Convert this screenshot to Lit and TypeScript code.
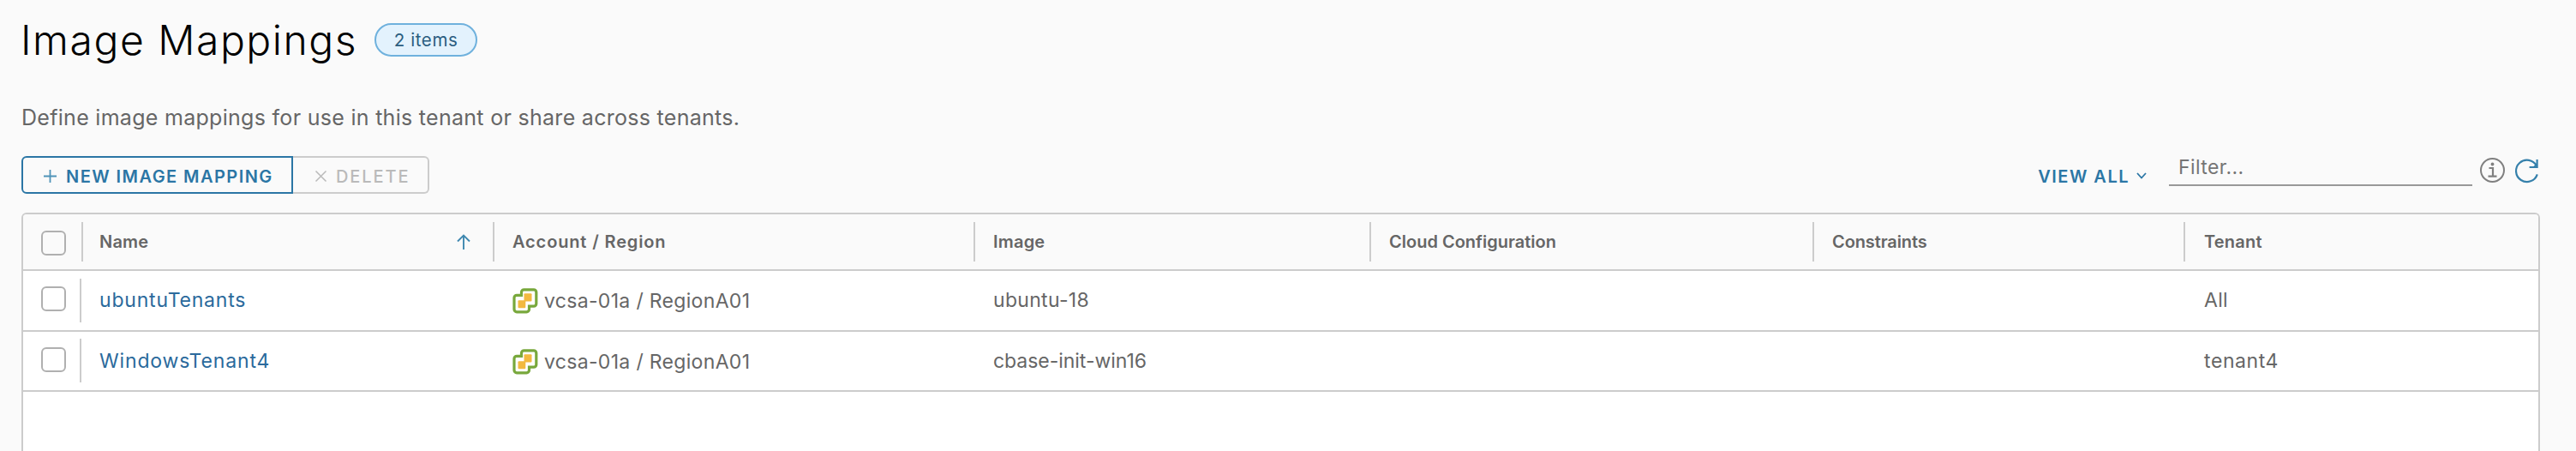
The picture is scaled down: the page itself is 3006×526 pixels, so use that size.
import { LitElement, html, css, svg } from "lit";

interface Column { label: string; track: number; spacing: number; sorted?: boolean }
interface Cell { text: string; spacing: number }
interface Row { name: Cell; account: Cell; image: Cell; tenant: Cell }

const columns: Column[] = [
  { label: "Name", track: 480, spacing: 0.2, sorted: true },
  { label: "Account / Region", track: 561, spacing: 0.86 },
  { label: "Image", track: 462, spacing: 0.2 },
  { label: "Cloud Configuration", track: 517, spacing: 0 },
  { label: "Constraints", track: 433, spacing: -0.1 },
  { label: "Tenant", track: 413, spacing: 0.2 },
];

const rows: Row[] = [
  {
    name: { text: "ubuntuTenants", spacing: 0.8 },
    account: { text: "vcsa-01a / RegionA01", spacing: 0.32 },
    image: { text: "ubuntu-18", spacing: 0.3 },
    tenant: { text: "All", spacing: 0.3 },
  },
  {
    name: { text: "WindowsTenant4", spacing: 0.86 },
    account: { text: "vcsa-01a / RegionA01", spacing: 0.32 },
    image: { text: "cbase-init-win16", spacing: -0.04 },
    tenant: { text: "tenant4", spacing: 0.6 },
  },
];

const label = (text: string, spacing: number) =>
  html`<span style="letter-spacing:${spacing}px">${text}</span>`;

// Two overlapping rounded squares with an offset pair of blocks inside.
const accountIcon = html`<svg class="account-icon" viewBox="0 0 30 30">${svg`
  <path d="M13.500 1.800h11.300a3 3 0 0 1 3 3v13.400a3 3 0 0 1-3 3h-5.300v3.600a3 3 0 0 1-3 3H5a3 3 0 0 1-3-3V11.300a3 3 0 0 1 3-3h5.500v-3.500a3 3 0 0 1 3-3z"
    fill="#fff" stroke="#78a83c" stroke-width="3.200"/>
  <rect x="13.500" y="6.300" width="9" height="9.300" rx="1" fill="#f2b940"/>
  <rect x="6.500" y="14.300" width="8.800" height="8.900" rx="1" fill="#f2b940"/>`}
</svg>`;

class AppRoot extends LitElement {
  static styles = css`
    :host { display: block; height: 526px; overflow: hidden; background: #fafafa; font-family: Inter, sans-serif; color: #666; white-space: nowrap; }
    * { box-sizing: border-box; }
    svg { display: block; fill: none; flex: none; }
    .page { display: flex; flex-direction: column; height: 526px; padding: 0 42px 0 25px; }
    .heading { display: flex; align-items: center; height: 93px; gap: 20px; }
    h1 { margin: 0 0 0 -1px; font-size: 48px; font-weight: 300; color: #000; letter-spacing: 1.53px; line-height: 60px; }
    .badge { display: flex; align-items: center; justify-content: center; width: 120px; height: 39px; border: 2px solid #6fb1dd; border-radius: 20px; background: #e3f2fd; color: #2b5d80; font-size: 20.5px; letter-spacing: 0.6px; }
    .intro { margin: 0; height: 88px; line-height: 88px; font-size: 25px; letter-spacing: 0.29px; }
    .toolbar { display: flex; justify-content: space-between; height: 67px; padding-top: 1px; }
    .group { display: flex; height: 44px; }
    button { display: flex; align-items: center; height: 44px; margin: 0; font: 600 20px Inter, sans-serif; background: none; border: 2px solid #2b76a5; color: #2b76a5; }
    .create { width: 317px; padding: 3px 0 0 23px; gap: 10px; border-radius: 6px 0 0 6px; letter-spacing: 1.45px; }
    .delete { width: 159px; padding: 3px 0 0 25px; gap: 10px; border-color: #ccc; border-left: 0; border-radius: 0 6px 6px 0; color: #bababa; font-weight: 500; letter-spacing: 1.9px; }
    .tools { display: flex; height: 44px; }
    .view { border: 0; padding: 4px 0 0; gap: 8px; margin-right: 26px; letter-spacing: 1.5px; }
    .filter { width: 354px; height: 35px; border-bottom: 2px solid #999; padding-left: 11px; line-height: 26px; font-size: 23px; letter-spacing: 0.4px; color: #757575; }
    .info { margin: 1px 0 0 8px; }
    .refresh { margin: 2px 1px 0 10px; }
    .grid { flex: 1; border: 2px solid #ccc; border-bottom: 0; border-radius: 6px 6px 0 0; background: #fff; }
    .head, .row { display: flex; border-bottom: 2px solid #ccc; align-items: center; }
    .head { height: 66px; background: #fafafa; border-radius: 4px 4px 0 0; font-size: 20px; font-weight: 600; }
    .row { height: 70.500px; font-size: 23px; }
    .pick { flex: none; width: 68px; height: 100%; padding: 2px 0 0 21px; display: flex; align-items: center; }
    .row .pick { width: 66px; padding: 0 0 3px 21px; }
    .box { width: 29px; height: 29px; border: 2px solid #b0b0b0; border-radius: 6px; }
    .cell { flex: none; display: flex; align-items: center; height: 46px; padding-left: 21px; }
    .head .cell { border-left: 2px solid #ccc; }
    .head .cell:nth-child(2) { padding-left: 19px; }
    .head .cell:last-child { padding-left: 22px; }
    .row .cell { padding: 0 0 0 23px; }
    .row .first { width: 482px; border-left: 2px solid #ccc; height: 51px; padding-left: 21px; }
    .row .cell:last-child { padding-left: 24px; }
    .row .account { padding: 2px 0 0 23px; }
    .sort { margin: 0 26px 0 auto; }
    .link { color: #2b6a9c; }
    .account-icon { width: 30px; height: 30px; margin-right: 7px; }
  `;

  render() {
    return html`<div class="page">
      <div class="heading"><h1>Image Mappings</h1><div class="badge">2 items</div></div>
      <p class="intro">Define image mappings for use in this tenant or share across tenants.</p>
      <div class="toolbar">
        <div class="group">
          <button class="create"><svg width="17" height="17" viewBox="0 0 17 17"><path d="M8.500 1v15M1 8.500h15" stroke="#4f93b8" stroke-width="1.800"/></svg>NEW IMAGE MAPPING</button>
          <button class="delete"><svg width="15" height="15" viewBox="0 0 15 15"><path d="M1.500 1.500l12 12M13.500 1.500l-12 12" stroke="#bababa" stroke-width="1.500"/></svg>DELETE</button>
        </div>
        <div class="tools">
          <button class="view">VIEW ALL<svg width="12" height="11" viewBox="0 0 12 11"><path d="M1 1l5 5.500L11 1" stroke="#2b76a5" stroke-width="1.800"/></svg></button>
          <div class="filter">Filter...</div>
          <svg class="info" width="31" height="31" viewBox="0 0 31 31"><circle cx="15.500" cy="15.500" r="13.500" stroke="#808080" stroke-width="2"/><path d="M11.500 13h4.500v9.500M10.500 22.700h10" stroke="#808080" stroke-width="2.200"/><circle cx="15.500" cy="8.500" r="1.900" fill="#808080"/></svg>
          <svg class="refresh" width="29" height="31" viewBox="0 0 29 31"><path d="M26.800 19.300A12.700 12.700 0 1 1 26 9.500M26.600 2v9h-9" stroke="#3580ab" stroke-width="2.200"/><path d="M26 6.500v4h-4z" fill="#3580ab"/></svg>
        </div>
      </div>
      <div class="grid">
        <div class="head"><div class="pick"><span class="box"></span></div>
          ${columns.map((c) => html`<div class="cell" style="width:${c.track}px">${label(c.label, c.spacing)}${c.sorted ? html`<svg class="sort" width="16" height="18" viewBox="0 0 16 18"><path d="M8 18V1.500M1 8.500l7-7 7 7" stroke="#3f88b0" stroke-width="1.900"/></svg>` : ""}</div>`)}
        </div>
        ${rows.map((r) => html`<div class="row"><div class="pick"><span class="box"></span></div>
          <div class="cell first link">${label(r.name.text, r.name.spacing)}</div>
          <div class="cell account" style="width:${columns[1].track}px">${accountIcon}${label(r.account.text, r.account.spacing)}</div>
          <div class="cell" style="width:${columns[2].track + columns[3].track + columns[4].track}px">${label(r.image.text, r.image.spacing)}</div>
          <div class="cell" style="width:${columns[5].track}px">${label(r.tenant.text, r.tenant.spacing)}</div>
        </div>`)}
      </div>
    </div>`;
  }
}
customElements.define("app-root", AppRoot);
